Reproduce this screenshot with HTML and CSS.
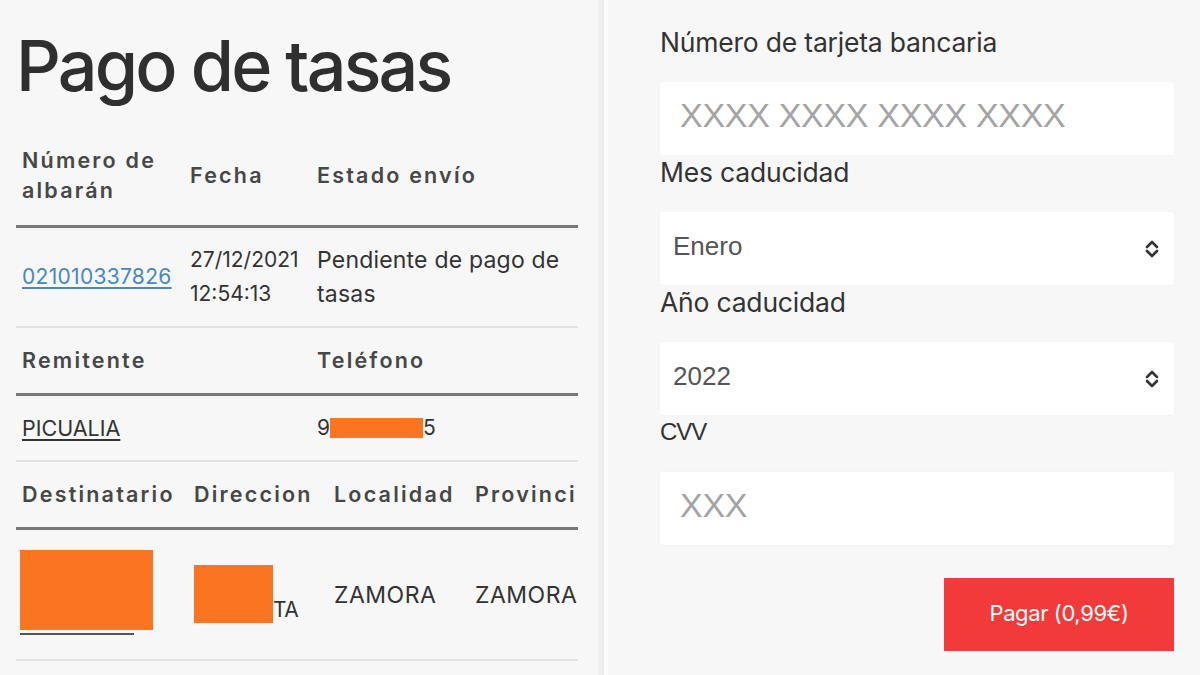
FILE: index.html
```html
<!DOCTYPE html>
<html lang="es">
<head>
<meta charset="utf-8">
<title>Pago de tasas</title>
<link rel="stylesheet" href="styles.css">
</head>
<body>
<div class="page">
  <section class="left">
    <h1 class="title">Pago de tasas</h1>

    <div class="tbl">
      <div class="row head cols1">
        <div class="cell">Número de albarán</div>
        <div class="cell">Fecha</div>
        <div class="cell">Estado envío</div>
      </div>
      <div class="row data cols1 two">
        <div class="cell num"><a class="link blue" href="#">021010337826</a></div>
        <div class="cell num">27/12/2021 12:54:13</div>
        <div class="cell txt">Pendiente de pago de tasas</div>
      </div>
    </div>

    <div class="tbl">
      <div class="row head cols2">
        <div class="cell">Remitente</div>
        <div class="cell">Teléfono</div>
      </div>
      <div class="row data cols2 one">
        <div class="cell"><a class="link dark" href="#">PICUALIA</a></div>
        <div class="cell">9<span class="redact phone"></span>5</div>
      </div>
    </div>

    <div class="tbl">
      <div class="row head cols3">
        <div class="cell">Destinatario</div>
        <div class="cell">Direccion</div>
        <div class="cell">Localidad</div>
        <div class="cell">Provinci</div>
      </div>
      <div class="row data cols3 three">
        <div class="cell">
          <div class="dest">
            <span class="redact r1"></span>
            <span class="uline"></span>
          </div>
        </div>
        <div class="cell">
          <div class="addr"><span class="redact r2"></span><span class="tail">TA</span></div>
        </div>
        <div class="cell caps">ZAMORA</div>
        <div class="cell caps">ZAMORA</div>
      </div>
    </div>
  </section>

  <div class="divider"></div>

  <section class="right">
    <label class="lbl">Número de tarjeta bancaria</label>
    <div class="box"><span class="ph">XXXX XXXX XXXX XXXX</span></div>

    <label class="lbl">Mes caducidad</label>
    <div class="box select"><span class="val">Enero</span>
      <svg class="arrows" width="16" height="20" viewBox="0 0 16 20"><path d="M3 8 L8 3 L13 8 M3 12 L8 17 L13 12" fill="none" stroke="#333" stroke-width="2.6" stroke-linecap="round" stroke-linejoin="round"/></svg>
    </div>

    <label class="lbl">Año caducidad</label>
    <div class="box select"><span class="val">2022</span>
      <svg class="arrows" width="16" height="20" viewBox="0 0 16 20"><path d="M3 8 L8 3 L13 8 M3 12 L8 17 L13 12" fill="none" stroke="#333" stroke-width="2.6" stroke-linecap="round" stroke-linejoin="round"/></svg>
    </div>

    <label class="lbl cvv">CVV</label>
    <div class="box"><span class="ph">XXX</span></div>

    <div class="actions"><button class="pay">Pagar (0,99€)</button></div>
  </section>
</div>
</body>
</html>
```
FILE: styles.css
```css
* { box-sizing: border-box; }
html, body { margin: 0; padding: 0; }
body {
  width: 1200px;
  height: 675px;
  overflow: hidden;
  background: #f7f7f7;
  font-family: Inter, "Noto Sans", sans-serif;
  color: #333;
}
.page { display: flex; height: 675px; }

.left {
  width: 598px;
  padding-left: 16px;
  padding-right: 20px;
  overflow: hidden;
}
.title {
  margin: 26px 0 19px;
  font-size: 70px;
  line-height: 80px;
  font-weight: 500;
  letter-spacing: -2.8px;
  color: #2f2f2f;
}

.tbl { width: 562px; overflow: hidden; }
.row { display: grid; align-items: center; }
.cols1 { grid-template-columns: 168px 127px 267px; }
.cols2 { grid-template-columns: 295px 267px; }
.cols3 { grid-template-columns: 172px 140px 141px 109px; }
.cell { padding-left: 6px; white-space: normal; }

.head {
  border-bottom: 3px solid #787878;
  font-size: 21.5px;
  font-weight: 600;
  letter-spacing: 2.2px;
  line-height: 30px;
  color: #474747;
  padding: 17px 0 18px;
}
.cols1.head { padding: 20px 0; }
.head .cell { white-space: nowrap; overflow: hidden; }
.cols1.head .cell:first-child { white-space: normal; padding-right: 4px; }

.data {
  border-bottom: 2px solid #e2e2e2;
  font-size: 21px;
  line-height: 34px;
  color: #333;
}
.data .txt { font-size: 23px; letter-spacing: 0.2px; }
.data .caps { font-size: 23px; letter-spacing: 0.5px; }
.data.two { height: 100px; }
.data.one { height: 66px; }
.data.three { height: 131px; }

.link { text-decoration: underline; text-underline-offset: 3px; }
.link.blue { color: #4a86c4; letter-spacing: 0.3px; }
.link.dark { color: #333; font-size: 21.5px; }

.redact { display: inline-block; background: #fa7421; }
.redact.phone { width: 93px; height: 20px; vertical-align: -3px; }
.dest { display: flex; flex-direction: column; margin-top: -4px; }
.redact.r1 { width: 133px; height: 80px; margin-left: -2px; }
.uline { width: 114px; height: 2px; background: #555; margin-left: -2px; margin-top: 3px; }
.addr { display: flex; align-items: flex-end; margin-top: -2px; }
.redact.r2 { width: 79px; height: 58px; }
.tail { line-height: 26px; font-size: 21px; letter-spacing: -0.5px; }

.divider {
  width: 10px;
  background: linear-gradient(to right, #f0f0f0 0, #ebebeb 60%, #fbfbfb 60%, #fbfbfb 100%);
}

.right {
  flex: 1;
  padding: 25px 26px 0 52px;
  display: flex;
  flex-direction: column;
}
.lbl {
  display: block;
  font-size: 26.5px;
  line-height: 34px;
  color: #333;
  margin-bottom: 23px;
  letter-spacing: -0.2px;
}
.lbl.cvv { font-family: "Liberation Sans", Arial, sans-serif; font-size: 24px; letter-spacing: -1px; }
.box {
  height: 73px;
  background: #fff;
  border-radius: 3px;
  box-shadow: 0 0 3px rgba(0,0,0,0.03);
  display: flex;
  align-items: center;
  padding-left: 20px;
  font-family: "Liberation Sans", Arial, sans-serif;
}
.ph { font-size: 34px; color: #a4a4a4; letter-spacing: -0.3px; margin-top: -7px; }
.select { padding-left: 13px; padding-right: 14px; justify-content: space-between; }
.val { font-size: 26px; color: #555; margin-top: -4px; }
.arrows { display: block; }

.actions { display: flex; justify-content: flex-end; margin-top: 33px; }
.pay {
  width: 230px;
  height: 73px;
  border: none;
  border-radius: 0;
  background: #f33a3a;
  color: #fff;
  font-family: Inter, "Noto Sans", sans-serif;
  font-size: 22px;
  letter-spacing: -0.4px;
  padding: 0 0 4px;
}
```
